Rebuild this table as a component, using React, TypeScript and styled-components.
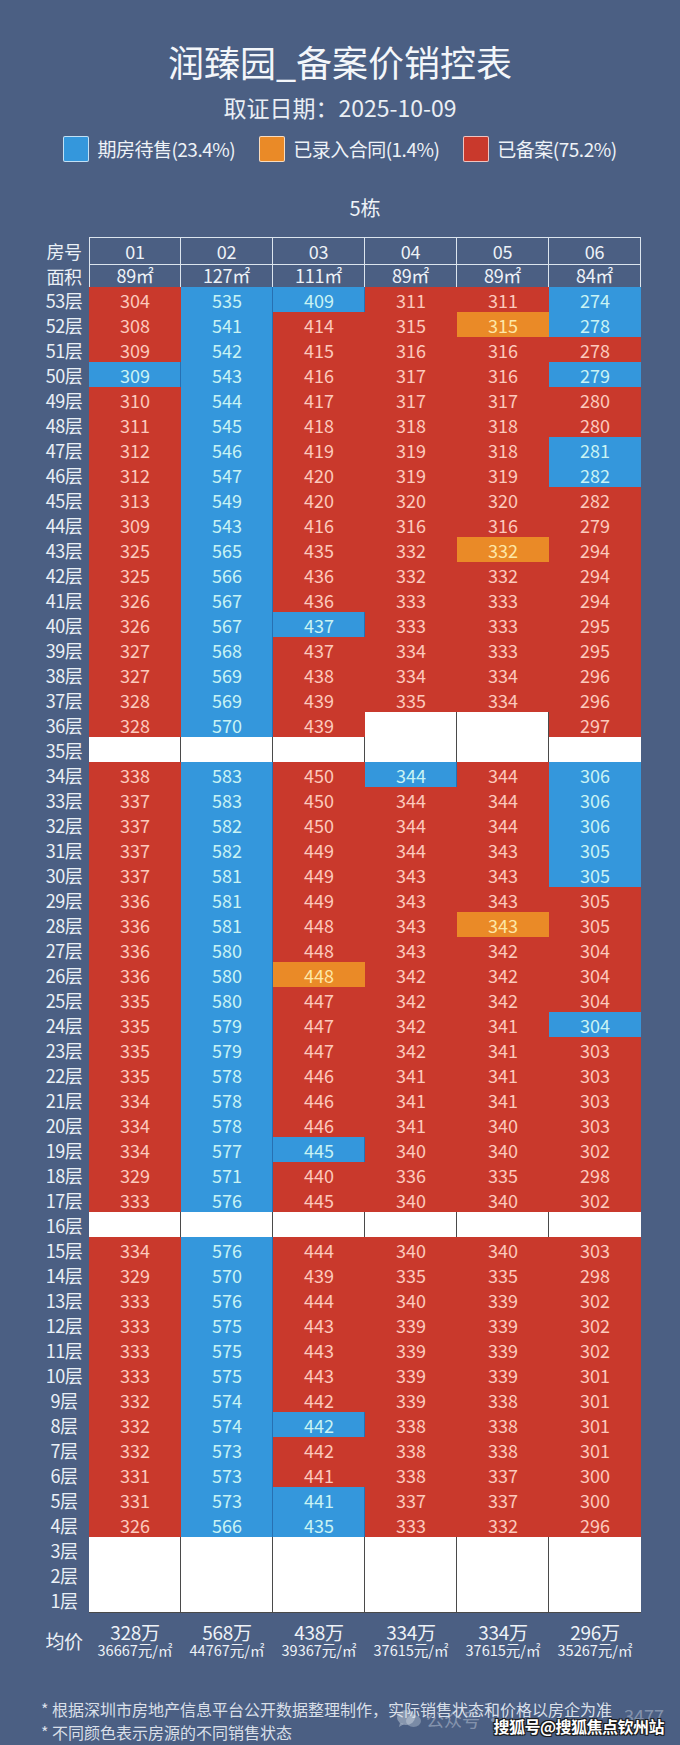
import styled, { createGlobalStyle } from 'styled-components';

const GlobalStyle = createGlobalStyle`
    html, body {
        margin: 0;
        padding: 0;
        background: #4b5f83;
    }
    body {
        font-family: "Noto Sans CJK SC", "Noto Sans", sans-serif;
    }
`;

type Status = 'R' | 'B' | 'O' | 'W';

const palette: Record<Status, { bg: string; fg: string; line: string }> = {
    R: { bg: '#c9392c', fg: '#fcc9bc', line: 'transparent' },
    B: { bg: '#3497dc', fg: '#c9f3f4', line: '#2770b2' },
    O: { bg: '#ea8a27', fg: '#fde7a6', line: 'transparent' },
    W: { bg: '#ffffff', fg: '#333333', line: '#4a4a4a' },
};

const units = ['01', '02', '03', '04', '05', '06'];
const areas = ['89㎡', '127㎡', '111㎡', '89㎡', '89㎡', '84㎡'];

const EMPTY = '-W -W -W -W -W -W';

// floors 53 -> 1
const floors: string[] = [
    '304R 535B 409B 311R 311R 274B',
    '308R 541B 414R 315R 315O 278B',
    '309R 542B 415R 316R 316R 278R',
    '309B 543B 416R 317R 316R 279B',
    '310R 544B 417R 317R 317R 280R',
    '311R 545B 418R 318R 318R 280R',
    '312R 546B 419R 319R 318R 281B',
    '312R 547B 420R 319R 319R 282B',
    '313R 549B 420R 320R 320R 282R',
    '309R 543B 416R 316R 316R 279R',
    '325R 565B 435R 332R 332O 294R',
    '325R 566B 436R 332R 332R 294R',
    '326R 567B 436R 333R 333R 294R',
    '326R 567B 437B 333R 333R 295R',
    '327R 568B 437R 334R 333R 295R',
    '327R 569B 438R 334R 334R 296R',
    '328R 569B 439R 335R 334R 296R',
    '328R 570B 439R -W -W 297R',
    EMPTY,
    '338R 583B 450R 344B 344R 306B',
    '337R 583B 450R 344R 344R 306B',
    '337R 582B 450R 344R 344R 306B',
    '337R 582B 449R 344R 343R 305B',
    '337R 581B 449R 343R 343R 305B',
    '336R 581B 449R 343R 343R 305R',
    '336R 581B 448R 343R 343O 305R',
    '336R 580B 448R 343R 342R 304R',
    '336R 580B 448O 342R 342R 304R',
    '335R 580B 447R 342R 342R 304R',
    '335R 579B 447R 342R 341R 304B',
    '335R 579B 447R 342R 341R 303R',
    '335R 578B 446R 341R 341R 303R',
    '334R 578B 446R 341R 341R 303R',
    '334R 578B 446R 341R 340R 303R',
    '334R 577B 445B 340R 340R 302R',
    '329R 571B 440R 336R 335R 298R',
    '333R 576B 445R 340R 340R 302R',
    EMPTY,
    '334R 576B 444R 340R 340R 303R',
    '329R 570B 439R 335R 335R 298R',
    '333R 576B 444R 340R 339R 302R',
    '333R 575B 443R 339R 339R 302R',
    '333R 575B 443R 339R 339R 302R',
    '333R 575B 443R 339R 339R 301R',
    '332R 574B 442R 339R 338R 301R',
    '332R 574B 442B 338R 338R 301R',
    '332R 573B 442R 338R 338R 301R',
    '331R 573B 441R 338R 337R 300R',
    '331R 573B 441B 337R 337R 300R',
    '326R 566B 435B 333R 332R 296R',
    EMPTY,
    EMPTY,
    EMPTY,
];

const prices = [
    ['328万', '36667元/㎡'],
    ['568万', '44767元/㎡'],
    ['438万', '39367元/㎡'],
    ['334万', '37615元/㎡'],
    ['334万', '37615元/㎡'],
    ['296万', '35267元/㎡'],
];

const Page = styled.div`
    width: 680px;
    min-height: 1745px;
    box-sizing: border-box;
    padding-top: 40px;
    background: #4b5f83;
    color: #eef2f7;
    position: relative;
    overflow: hidden;
`;

const Title = styled.h1`
    margin: 0;
    font-size: 36px;
    line-height: 43px;
    font-weight: 400;
    text-align: center;
    color: #f3f6fa;
`;

const DateLine = styled.div`
    margin-top: 9px;
    font-size: 23px;
    line-height: 30px;
    text-align: center;
    color: #e9eef4;
`;

const Legend = styled.div`
    margin-top: 14px;
    display: flex;
    justify-content: center;
    gap: 24px;
`;

const LegendItem = styled.div`
    display: flex;
    align-items: center;
    gap: 8px;
    font-size: 19px;
    line-height: 26px;
    color: #eef2f7;
    letter-spacing: -0.5px;
`;

const Swatch = styled.span<{ $status: Status }>`
    width: 26px;
    height: 26px;
    box-sizing: border-box;
    border-radius: 2px;
    border: 1px solid rgba(255, 255, 255, 0.7);
    background: ${(p) => palette[p.$status].bg};
`;

const Sheet = styled.div`
    width: 602px;
    margin: 0 auto;
`;

const Building = styled.div`
    margin: 32px 0 15px 50px;
    font-size: 20px;
    line-height: 28px;
    text-align: center;
    color: #eef2f7;
`;

const Row = styled.div`
    display: grid;
    grid-template-columns: 50px repeat(6, 92px);
    height: 25px;
`;

const RowLabel = styled.div`
    display: flex;
    align-items: center;
    justify-content: center;
    font-size: 18px;
    color: #eaf0f6;
    letter-spacing: -0.5px;
`;

const HeadCell = styled.div<{ $top?: boolean; $left?: boolean }>`
    box-sizing: border-box;
    display: flex;
    align-items: center;
    justify-content: center;
    font-size: 18px;
    color: #eef2f7;
    border-right: 1px solid #dce5ee;
    border-bottom: 1px solid #dce5ee;
    border-top: ${(p) => (p.$top ? '1px solid #dce5ee' : 'none')};
    border-left: ${(p) => (p.$left ? '1px solid #dce5ee' : 'none')};
    letter-spacing: -0.3px;
`;

const Cell = styled.div<{ $status: Status; $last?: boolean }>`
    display: flex;
    align-items: center;
    justify-content: center;
    font-size: 18px;
    background: ${(p) => palette[p.$status].bg};
    color: ${(p) => palette[p.$status].fg};
    box-shadow: ${(p) =>
        p.$last
            ? `inset 0 -1px 0 ${palette[p.$status].line}`
            : `inset -1px -1px 0 ${palette[p.$status].line}`};
`;

const PriceRow = styled.div`
    margin-top: 10px;
    display: grid;
    grid-template-columns: 50px repeat(6, 92px);
    height: 36px;
`;

const PriceLabel = styled(RowLabel)`
    font-size: 19px;
`;

const PriceCell = styled.div`
    display: flex;
    flex-direction: column;
    align-items: center;
    color: #eef2f7;
    white-space: nowrap;
`;

const Total = styled.div`
    font-size: 19px;
    line-height: 20px;
    letter-spacing: -0.3px;
`;

const PerMeter = styled.div`
    font-size: 14.5px;
    line-height: 16px;
`;

const Notes = styled.div`
    margin-top: 40px;
    padding-left: 41px;
    font-size: 16px;
    line-height: 23px;
    color: #d9dfe8;
    position: relative;
`;

const Note = styled.div`
    white-space: nowrap;
`;

const FaintMark = styled.div`
    position: absolute;
    top: 10px;
    left: 396px;
    display: flex;
    align-items: center;
    gap: 4px;
    font-size: 18px;
    line-height: 22px;
    color: rgba(225, 232, 241, 0.4);
    white-space: nowrap;
`;

const FaintTail = styled.span`
    margin-left: 118px;
    margin-top: -8px;
`;

const SohuMark = styled.div`
    position: absolute;
    right: 16px;
    top: 17px;
    font-size: 16px;
    font-weight: 700;
    color: #ffffff;
    letter-spacing: -0.5px;
    text-shadow: -1px -1px 0 #1a1a1a, 1px -1px 0 #1a1a1a, -1px 1px 0 #1a1a1a,
        1px 1px 0 #1a1a1a, 0 0 2px #000;
`;

function WeChatGlyph() {
    return (
        <svg width='26' height='20' viewBox='0 0 26 20' fill='currentColor'>
            <ellipse cx='10' cy='8.5' rx='9' ry='7.5' />
            <path d='M4 14 L3 18 L8 15 Z' />
            <ellipse cx='17.5' cy='12' rx='7.5' ry='6' opacity='0.8' />
        </svg>
    );
}

function parse(line: string) {
    return line.split(' ').map((token) => ({
        value: token.slice(0, -1).replace('-', ''),
        status: token.slice(-1) as Status,
    }));
}

function App() {
    return (
        <>
            <GlobalStyle />
            <Page>
                <Title>润臻园_备案价销控表</Title>
                <DateLine>取证日期：2025-10-09</DateLine>
                <Legend>
                    <LegendItem>
                        <Swatch $status='B' />
                        期房待售(23.4%)
                    </LegendItem>
                    <LegendItem>
                        <Swatch $status='O' />
                        已录入合同(1.4%)
                    </LegendItem>
                    <LegendItem>
                        <Swatch $status='R' />
                        已备案(75.2%)
                    </LegendItem>
                </Legend>

                <Sheet>
                    <Building>5栋</Building>
                    <Row>
                        <RowLabel>房号</RowLabel>
                        {units.map((u, i) => (
                            <HeadCell key={u} $top $left={i === 0}>
                                {u}
                            </HeadCell>
                        ))}
                    </Row>
                    <Row>
                        <RowLabel>面积</RowLabel>
                        {areas.map((a, i) => (
                            <HeadCell key={i} $left={i === 0}>
                                {a}
                            </HeadCell>
                        ))}
                    </Row>
                    {floors.map((line, idx) => {
                        const floor = 53 - idx;
                        return (
                            <Row key={floor}>
                                <RowLabel>{floor}层</RowLabel>
                                {parse(line).map((c, i) => (
                                    <Cell key={i} $status={c.status} $last={i === 5}>
                                        {c.value}
                                    </Cell>
                                ))}
                            </Row>
                        );
                    })}
                    <PriceRow>
                        <PriceLabel>均价</PriceLabel>
                        {prices.map(([total, per], i) => (
                            <PriceCell key={i}>
                                <Total>{total}</Total>
                                <PerMeter>{per}</PerMeter>
                            </PriceCell>
                        ))}
                    </PriceRow>
                </Sheet>

                <Notes>
                    <Note>* 根据深圳市房地产信息平台公开数据整理制作，实际销售状态和价格以房企为准</Note>
                    <Note>* 不同颜色表示房源的不同销售状态</Note>
                    <FaintMark>
                        <WeChatGlyph />
                        <span>公众号 ·</span>
                        <FaintTail>3477</FaintTail>
                    </FaintMark>
                    <SohuMark>搜狐号@搜狐焦点钦州站</SohuMark>
                </Notes>
            </Page>
        </>
    );
}

export default App;
